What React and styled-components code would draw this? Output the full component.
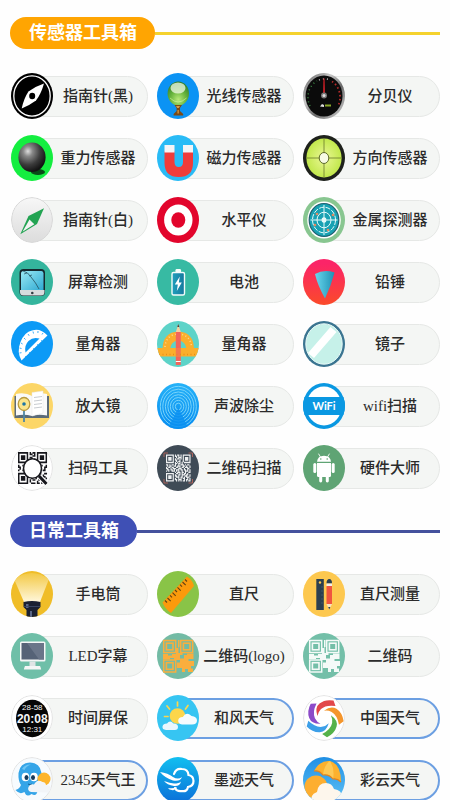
import styled, { createGlobalStyle } from "styled-components";

const GlobalStyle = createGlobalStyle`
  * {
    box-sizing: border-box;
  }
  body {
    margin: 0;
    background: #fefefe;
    font-family: "Liberation Serif", "Noto Sans CJK SC", serif;
  }
`;

const Page = styled.main`
  padding: 17px 10px 24px;
`;

const Section = styled.section`
  margin-bottom: 24px;
`;

const SectionHead = styled.header`
  display: flex;
  align-items: center;
  margin-bottom: 24px;
  &::after {
    content: "";
    flex: 1;
    height: 3px;
    background: ${(props) => props.$line};
  }
`;

const SectionTitle = styled.h2`
  margin: 0;
  height: 32px;
  padding: 0 18px 0 19px;
  border-radius: 16px;
  background: ${(props) => props.$color};
  color: #fff;
  font-size: 18px;
  font-weight: 700;
  line-height: 32px;
  white-space: nowrap;
`;

const ToolGrid = styled.div`
  display: grid;
  grid-template-columns: repeat(3, minmax(0, 1fr));
  gap: 16px 9px;
  padding-left: 1px;
`;

const ToolButton = styled.button`
  display: flex;
  align-items: center;
  width: 100%;
  padding: 0;
  border: none;
  background: none;
  font-family: inherit;
  color: #2b2b2b;
  cursor: pointer;
`;

const ToolIcon = styled.svg`
  flex: none;
  width: 42px;
  height: 46px;
  border-radius: 50%;
  overflow: hidden;
  z-index: 1;
`;

const ToolLabel = styled.span`
  flex: 1;
  height: 41px;
  margin-left: -22px;
  padding-left: 17px;
  border: ${(props) => (props.$active ? "2px solid #6c9fe2" : "1px solid #e6e8e6")};
  border-radius: 0 21px 21px 0;
  background: #f4f6f4;
  font-size: 15px;
  font-weight: 500;
  line-height: ${(props) => (props.$active ? "36px" : "38px")};
  text-align: center;
  white-space: nowrap;
`;

const Bg = ({ fill }) => <rect width="42" height="46" fill={fill} />;

const Rim = ({ fill = "#fff", stroke = "#e2e2e2" }) => (
  <ellipse cx="21" cy="23" rx="20.4" ry="22.4" fill={fill} stroke={stroke} />
);

// draws one square for every "#" of the rows
const Modules = ({ rows, x, y, w, h, fill }) => {
  const cw = w / rows[0].length;
  const ch = h / rows.length;
  let d = "";
  rows.forEach((row, r) => {
    row.split("").forEach((cell, c) => {
      if (cell === "#") {
        d += `M${x + c * cw} ${y + r * ch}h${cw + 0.05}v${ch + 0.05}h${-cw - 0.05}z`;
      }
    });
  });
  return <path d={d} fill={fill} />;
};

const QR_DENSE = [
  "#######.#.##.#.#######",
  "#.....#.##.#.#.#.....#",
  "#.###.#..#.###.#.###.#",
  "#.###.#.#.##.#.#.###.#",
  "#.###.#.##..#..#.###.#",
  "#.....#..#.##..#.....#",
  "#######.#.#.#.#.######",
  "........##.##.#.......",
  "##.#.##.#..#.###.#.##.",
  ".#.##..##.###..##.#..#",
  "#.##.##..##.#.##.###.#",
  "##..#.###..###..#..##.",
  ".##.##.#.###.##.##.#.#",
  "#.#..###.#.#..#..###.#",
  "........#.###.##.#..##",
  "#######..##.#.#.##.#..",
  "#.....#.#..##.###.##.#",
  "#.###.#.##.#..#..##..#",
  "#.###.#..###.##.#.###.",
  "#.###.#.#..#.#.##..#.#",
  "#.....#.##.###..#.##.#",
  "#######..#.#.#.##.#.##",
];

const QR_LENS = [
  "#######.#.##.#######",
  "#.....#.##.#.#.....#",
  "#.###.#...##.#.###.#",
  "#.###.#.##...#.###.#",
  "#.###.#..#.#.#.###.#",
  "#.....#.#..#.#.....#",
  "#######..#.#.#######",
  "....................",
  "#..#............#..#",
  "##................##",
  ".#................#.",
  "#..#.............##.",
  "....................",
  "#######........#..##",
  "#.....#.#..#..##.#..",
  "#.###.#.##.##....##.",
  "#.###.#..#..#.#....#",
  "#.###.#.#.##..##.##.",
  "#.....#.#....#..#..#",
  "#######..###.##.#.#.",
];

const BlockQr = ({ bg, fill }) => (
  <>
    <Bg fill={bg} />
    <g fill="none" stroke={fill} strokeWidth="1.5">
      <rect x="6.7" y="7.5" width="12" height="12" />
      <rect x="23.7" y="7.5" width="12" height="12" />
      <rect x="6.7" y="27" width="12" height="12" />
    </g>
    <g fill="none" stroke={fill} strokeWidth="1.6">
      <rect x="9.4" y="10.2" width="6.6" height="6.6" />
      <rect x="26.4" y="10.2" width="6.6" height="6.6" />
      <rect x="9.4" y="29.7" width="6.6" height="6.6" />
    </g>
    <path
      fill={fill}
      d="M6 21h5v1.500h4V21h4v-6h2V7h1.500v7h-1v6h4v2h-2.500v3.500h4V22h3v-1.500h6.500V26h-5v2h5.500v5h-3v2.500h2V39h-5v-3h-3v3h-3v-4h-5v-5.500h3V27h-6v-2h-4v1H6z"
    />
  </>
);

const icons = {
  compassDark: (
    <>
      <Bg fill="#000" />
      <ellipse cx="21" cy="23" rx="18.2" ry="20.2" fill="none" stroke="#fff" strokeWidth="1.3" />
      <path fill="#fff" d="M33 10.500Q30 21 25 27.500Q19 32 10.700 35.500Q13 25 17.500 18.500Q24 13.500 33 10.500z" />
      <ellipse cx="21.2" cy="23" rx="3" ry="3.2" fill="#000" />
    </>
  ),
  light: (
    <>
      <defs>
        <radialGradient id="lightBall" cx="0.5" cy="0.75" r="0.75">
          <stop offset="0" stopColor="#b9ea7a" />
          <stop offset="0.5" stopColor="#67b43c" />
          <stop offset="1" stopColor="#2c7a2c" />
        </radialGradient>
      </defs>
      <Bg fill="#0b93f4" />
      <ellipse cx="21.3" cy="20.5" rx="10.7" ry="12" fill="url(#lightBall)" />
      <ellipse cx="21" cy="15" rx="7.5" ry="5.5" fill="#f2fae8" opacity="0.75" />
      <path d="M13 25q8 8 16.500 0" fill="none" stroke="#d8f6a8" opacity="0.6" />
      <path fill="#7a4a17" d="M17.500 32h7.500l-2 3v3l3.200 3v1.500h-9.600V41l3-3v-3z" />
      <path fill="#d59a45" d="M19 33h4l-1.200 2h-1.600zM20.500 37h1.300v3.500h-1.300z" />
    </>
  ),
  decibel: (
    <>
      <defs>
        <linearGradient id="meterRim" x1="0" y1="0" x2="1" y2="1">
          <stop offset="0" stopColor="#555" />
          <stop offset="0.35" stopColor="#c8c8c8" />
          <stop offset="0.6" stopColor="#6a6a6a" />
          <stop offset="1" stopColor="#ddd" />
        </linearGradient>
      </defs>
      <Bg fill="url(#meterRim)" />
      <ellipse cx="21" cy="23" rx="18.5" ry="20.5" fill="#0b0b0b" />
      <path d="M7 33A16 18 0 0 1 14 8" fill="none" stroke="#3e8c45" strokeWidth="1.5" strokeDasharray="1 3" />
      <path d="M16 7A16 18 0 0 1 27 7" fill="none" stroke="#bbb" strokeWidth="1.5" strokeDasharray="1 3" />
      <path d="M29 8.500A16 18 0 0 1 35 33" fill="none" stroke="#b32a2a" strokeWidth="1.8" strokeDasharray="1.5 2.5" />
      <path d="M20.400 23L21 5.500L21.700 23z" fill="#e8242c" stroke="#e8242c" strokeWidth="0.6" />
      <circle cx="21" cy="22.5" r="3" fill="#777" />
      <circle cx="21" cy="22.5" r="1.5" fill="#ddd" />
      <path d="M17 33.500l2-2.500 2 1v2z" fill="#ddd" />
      <rect x="22" y="31.5" width="6" height="2" fill="#8aa828" />
    </>
  ),
  gravity: (
    <>
      <defs>
        <radialGradient id="steelBall" cx="0.35" cy="0.3" r="0.7">
          <stop offset="0" stopColor="#ddd" />
          <stop offset="0.25" stopColor="#888" />
          <stop offset="0.65" stopColor="#3c3c3c" />
          <stop offset="1" stopColor="#141414" />
        </radialGradient>
      </defs>
      <Bg fill="#14ee40" />
      <ellipse cx="27" cy="37" rx="7" ry="3" fill="#0a4a18" />
      <ellipse cx="21" cy="22.2" rx="13.6" ry="14.8" fill="url(#steelBall)" />
    </>
  ),
  magnet: (
    <>
      <Bg fill="#29bbf6" />
      <path fill="#f03c3a" d="M7.500 16h10v11q0 5 4.300 5t4.200-5V16h10v12q0 14-14.200 14T7.500 28z" />
      <path fill="#f4f4f6" d="M7.500 10h10v7.500h-10zM26 10h10v7.500H26z" />
    </>
  ),
  direction: (
    <>
      <defs>
        <radialGradient id="limeGlass">
          <stop offset="0" stopColor="#eaf795" />
          <stop offset="1" stopColor="#c2e84c" />
        </radialGradient>
      </defs>
      <Bg fill="#1e211c" />
      <ellipse cx="21" cy="23" rx="17.6" ry="19.6" fill="url(#limeGlass)" />
      <path d="M21 4v38M4 23h34" stroke="#697a2b" strokeWidth="0.8" />
      <ellipse cx="21" cy="23" rx="4.8" ry="5.5" fill="#f7fbe4" stroke="#5d6b28" />
    </>
  ),
  compassLight: (
    <>
      <defs>
        <linearGradient id="silver" x1="0" y1="0" x2="0" y2="1">
          <stop offset="0" stopColor="#f7f7f7" />
          <stop offset="1" stopColor="#dcdcdc" />
        </linearGradient>
      </defs>
      <Rim fill="url(#silver)" stroke="#d6d6d6" />
      <path fill="#22a352" d="M33 11.200L26 27L9.300 37.200L17.500 19z" />
      <path fill="#f3f3f3" d="M18.500 22.500l4.800 4.800L11.500 34.800z" />
    </>
  ),
  level: (
    <>
      <Bg fill="#e2052c" />
      <ellipse cx="21.3" cy="23" rx="14.2" ry="15.5" fill="#fff" />
      <ellipse cx="21.3" cy="23" rx="7" ry="7.7" fill="#e2052c" />
    </>
  ),
  metal: (
    <>
      <Bg fill="#88c690" />
      <ellipse cx="21" cy="23" rx="16.8" ry="18.6" fill="#fff" />
      <ellipse cx="21" cy="23" rx="14.8" ry="16.5" fill="#18a1b3" stroke="#22606f" strokeWidth="1.2" />
      <g fill="none" stroke="#e6fafa" strokeWidth="1">
        <ellipse cx="21" cy="23" rx="11.5" ry="12.8" strokeDasharray="5 1.5" />
        <ellipse cx="21" cy="23" rx="7" ry="7.8" />
        <path d="M21 8v30M7.500 23h27" />
      </g>
      <ellipse cx="21" cy="23" rx="2.4" ry="2.7" fill="#e6fafa" />
      <g fill="#e18a62">
        <circle cx="14" cy="17" r="1.3" />
        <circle cx="30" cy="18" r="1.3" />
        <circle cx="12" cy="28" r="1.3" />
        <circle cx="25" cy="33" r="1.3" />
      </g>
    </>
  ),
  screen: (
    <>
      <defs>
        <linearGradient id="tablet" x1="0" y1="0" x2="1" y2="1">
          <stop offset="0" stopColor="#9aeaf4" />
          <stop offset="1" stopColor="#2fa9d2" />
        </linearGradient>
      </defs>
      <Bg fill="#34b59d" />
      <rect x="8.5" y="10" width="25.5" height="27" rx="4" fill="#16282e" />
      <path d="M9 31h24.500v2q0 3.500-3.500 3.500H12.500Q9 36.500 9 33z" fill="#d7dcde" />
      <path d="M10 14.500Q10 12 12.500 12h18q2 0 2 2.500V31H10z" fill="url(#tablet)" />
      <path d="M12 12q5 1 8 6 5 6 8 12" fill="none" stroke="#24505e" strokeWidth="0.8" />
      <path d="M13 15l3-1m2 3l3-1" stroke="#24505e" strokeWidth="0.7" />
      <circle cx="21.3" cy="34" r="1.3" fill="#2f3d42" />
    </>
  ),
  battery: (
    <>
      <defs>
        <linearGradient id="cell" x1="0" y1="0" x2="1" y2="0">
          <stop offset="0" stopColor="#1fa0bd" />
          <stop offset="1" stopColor="#16779c" />
        </linearGradient>
      </defs>
      <Bg fill="#37baa3" />
      <rect x="18.5" y="10" width="5.5" height="4" rx="1.2" fill="#f2fbfa" />
      <rect x="15" y="13.5" width="12.5" height="22.5" rx="1.5" fill="url(#cell)" stroke="#f2fbfa" strokeWidth="1.4" />
      <path d="M22.800 17.500l-5 8h3l-1 6.500 5-8.500h-3z" fill="#fff" />
    </>
  ),
  plumb: (
    <>
      <defs>
        <linearGradient id="plumbBg" x1="0" y1="0" x2="0" y2="1">
          <stop offset="0.1" stopColor="#fb2468" />
          <stop offset="1" stopColor="#fb4a2a" />
        </linearGradient>
        <linearGradient id="cone" x1="0" y1="0" x2="1" y2="0">
          <stop offset="0" stopColor="#68d8ee" />
          <stop offset="1" stopColor="#1f8fb4" />
        </linearGradient>
      </defs>
      <Bg fill="url(#plumbBg)" />
      <path d="M12 15q9-5 19.500-1.500Q28 27 22 39.500Q14.500 26 12 15z" fill="url(#cone)" />
    </>
  ),
  protractor: (
    <>
      <Bg fill="#0c9af6" />
      <path
        fill="#fff"
        fillRule="evenodd"
        d="M10.500 39.500Q5.500 31 9.500 21T21 9.500Q29 6.500 36.500 14.500zM14.500 31.500L28.500 17.500Q22 15.500 17.500 20T14.500 31.500z"
      />
      <path
        d="M8.500 32l2-.3M8.500 27l2 .5M10 22l1.600 1M13 17l1.500 1.500M17 13l1.200 1.800M22 10.500l.5 2M27 10l-.1 2M32 12l-1 1.500"
        stroke="#0c9af6"
        strokeWidth="0.8"
      />
      <path d="M14 35l1.500 1.500M18 31l1.500 1.500M22 27l1.500 1.500M26 23l1.500 1.500M30 19l1.500 1.500" stroke="#0c9af6" strokeWidth="0.6" />
    </>
  ),
  rulerSet: (
    <>
      <Bg fill="#5dd3c8" />
      <path
        fill="#fbae2c"
        fillRule="evenodd"
        d="M5.500 28Q6 11 21.300 10.500Q36.500 11 37 28zM13 28h16.500Q28.500 20 21.300 19.500Q14 20 13 28z"
      />
      <path d="M8 26Q9 13.500 21.300 13Q33.500 13.500 34.500 26" fill="none" stroke="#fddb8f" strokeWidth="1.5" strokeDasharray="1 2.5" />
      <path fill="#f2655c" d="M18.800 11h5v33h-5z" />
      <path fill="#f6cfa0" d="M18.800 11l2.500-7.500 2.500 7.500z" />
      <path fill="#5a3b35" d="M20.300 6l1-3 1 3z" />
      <path fill="#fbae2c" d="M0 27h42v8.500H0z" />
      <path fill="#f2655c" d="M18.800 27h5v8.500h-5z" opacity="0.75" />
      <path fill="#fff" d="M18.800 40h5v1h-5z" />
      <path d="M2 33.500h38" stroke="#e88f1a" strokeWidth="1.5" strokeDasharray="1 2.5" />
    </>
  ),
  mirror: (
    <>
      <Bg fill="#3b7591" />
      <ellipse cx="21" cy="23" rx="18.2" ry="20.2" fill="#c6f1e9" stroke="#e6f8f6" />
      <path d="M5 32L27.500 6l6 5L11 37z" fill="#fff" />
    </>
  ),
  magnifier: (
    <>
      <Bg fill="#fcd667" />
      <path d="M3.500 13h34.500v22H3.500z" fill="#5c6b78" />
      <path d="M5 11q9-2 16 2 6-4 15-2v21.500q-9-1.500-15 .5-7-2-16-.5z" fill="#fafafa" />
      <path d="M21 13V9.500l11-1.500v22l-11 3z" fill="#fff" stroke="#e7e7e7" strokeWidth="0.5" />
      <path d="M23 14.500l8-1M23 18l8-1M23 21.500l8-1M23 25l8-1" stroke="#b9bec4" strokeWidth="0.8" />
      <path d="M13 27v12" stroke="#4f87a3" strokeWidth="1.8" />
      <ellipse cx="13" cy="21" rx="5.8" ry="6.5" fill="#fbe58b" stroke="#b99b3f" strokeWidth="1.3" />
      <circle cx="13" cy="21" r="1.8" fill="#1d76a5" />
    </>
  ),
  sound: (
    <>
      <defs>
        <linearGradient id="waveBg" x1="0" y1="0" x2="0" y2="1">
          <stop offset="0" stopColor="#25b2f8" />
          <stop offset="1" stopColor="#078cf0" />
        </linearGradient>
      </defs>
      <Bg fill="url(#waveBg)" />
      <g fill="none" stroke="#83d8fb" strokeWidth="0.9">
        {[3, 5.5, 8, 10.5, 13, 15.5, 18].map((r) => (
          <ellipse key={r} cx="21.3" cy="23.5" rx={r} ry={r * 1.12} />
        ))}
      </g>
      <path d="M21.300 25L32 46H10.500z" fill="#0a90f1" opacity="0.85" />
    </>
  ),
  wifi: (
    <>
      <Bg fill="#0a98e2" />
      <ellipse cx="21" cy="23" rx="17.6" ry="19.6" fill="#fff" />
      <path d="M0 14h42v18H0z" fill="#0a98e2" />
      <text
        x="21"
        y="27"
        textAnchor="middle"
        fill="#fff"
        fontFamily="Lato, 'Liberation Sans', sans-serif"
        fontWeight="700"
        fontSize="11"
      >
        WiFi
      </text>
    </>
  ),
  scan: (
    <>
      <Rim />
      <Modules rows={QR_LENS} x={7} y={7} w={29} h={32} fill="#17171c" />
      <path d="M28 31l8 8.500" stroke="#fff" strokeWidth="5" />
      <path d="M28 31l7.500 8" stroke="#17171c" strokeWidth="3" />
      <ellipse cx="21.5" cy="23.5" rx="9" ry="9.8" fill="#fff" stroke="#17171c" strokeWidth="1.6" />
    </>
  ),
  qrScan: (
    <>
      <Bg fill="#3f4b56" />
      <Modules rows={QR_DENSE} x={9} y={9.5} w={24.5} h={27} fill="#eef0f1" />
      <path
        d="M7 12V8h4M31.500 8h4v4M7 34v4h4M31.500 38h4v-4"
        fill="none"
        stroke="#c4685c"
        strokeWidth="0.8"
      />
    </>
  ),
  android: (
    <>
      <Bg fill="#5fa474" />
      <g fill="#fff">
        <path d="M14 16.800Q14.500 11 21 10.800Q27.500 11 28 16.800z" />
        <path d="M14 18h14v12.500q0 1.500-1.500 1.500h-11Q14 32 14 30.500z" />
        <rect x="10.3" y="18" width="3" height="10" rx="1.5" />
        <rect x="28.7" y="18" width="3" height="10" rx="1.5" />
        <rect x="16.2" y="30" width="3" height="7.5" rx="1.4" />
        <rect x="22.8" y="30" width="3" height="7.5" rx="1.4" />
      </g>
      <path d="M17.500 12l-1.800-3M24.500 12l1.800-3" stroke="#fff" strokeWidth="0.9" strokeLinecap="round" />
      <circle cx="17.8" cy="14" r="0.8" fill="#5fa474" />
      <circle cx="24.2" cy="14" r="0.8" fill="#5fa474" />
    </>
  ),
  torch: (
    <>
      <defs>
        <linearGradient id="beam" x1="0" y1="0" x2="0" y2="1">
          <stop offset="0" stopColor="#f3c945" />
          <stop offset="1" stopColor="#fff7dc" />
        </linearGradient>
      </defs>
      <Bg fill="#f0bd28" />
      <path d="M3 8Q21-4 38 8L29 31H13z" fill="url(#beam)" />
      <path d="M12.500 31q8.500-2 17 0v5l-3 3v7h-11v-7l-3-3z" fill="#1b2132" />
      <path d="M15 33h2.500v4H15zM19 40h2v6h-2z" fill="#5a6787" />
      <path d="M13 35.500h16" stroke="#3c4867" strokeWidth="0.9" />
    </>
  ),
  ruler: (
    <>
      <Bg fill="#89c447" />
      <path d="M5.500 31.500L30 5.500q6 4 7 9.500L14 42q-6-4-8.500-10.500z" fill="#fb9a0c" />
      <path
        d="M8 29.500l2 2M10.500 27l3.200 3.200M13 24.300l2 2M15.500 21.700l3.200 3.200M18 19l2 2M20.500 16.400l3.200 3.200M23 13.700l2 2M25.500 11l3.200 3.200M28 8.500l2 2"
        stroke="#5f4312"
        strokeWidth="1.1"
      />
    </>
  ),
  stationery: (
    <>
      <Bg fill="#fdc84f" />
      <rect x="13.3" y="8" width="7.5" height="31" fill="#2b3f50" />
      <circle cx="17" cy="11.5" r="1.2" fill="#fdc84f" />
      <path d="M20 16h-2M20 20h-2M20 24h-2M20 28h-2M20 32h-2" stroke="#48606f" strokeWidth="0.7" />
      <path d="M23.500 12.500q0-4.500 2.800-4.500t2.700 4.500z" fill="#2b3f50" />
      <path d="M23.500 12.500h5.500v3h-5.500z" fill="#f4efe7" />
      <path d="M23.500 15h5.500v18h-5.500z" fill="#f0553f" />
      <path d="M23.500 33h5.500l-2.700 5.500z" fill="#f8e3bf" />
      <path d="M25.200 36h2.200l-1.100 2.500z" fill="#2b3f50" />
    </>
  ),
  led: (
    <>
      <Bg fill="#6fbfa8" />
      <rect x="9" y="8.5" width="25.5" height="20" rx="1.5" fill="#f4f6f6" />
      <rect x="10.5" y="10" width="22.5" height="16.5" fill="#566277" />
      <path d="M16 10h17v16.500H28z" fill="#6a7589" />
      <path d="M18.500 28.500h6v5h-6z" fill="#dfe4e5" />
      <path d="M14 33h15q1.500 3.500 1 3.500H13q-.5 0 1-3.500z" fill="#f4f6f6" />
    </>
  ),
  qrLogo: <BlockQr bg="#73bba5" fill="#f9ae3e" />,
  qrPlain: <BlockQr bg="#73bfa8" fill="#f4faf8" />,
  clock: (
    <>
      <Rim />
      <ellipse cx="21.3" cy="23.5" rx="16.3" ry="18.7" fill="#060606" />
      <g fill="#f5f5f5" textAnchor="middle" fontFamily="'Liberation Sans', sans-serif">
        <text x="21.3" y="15" fontSize="8">28-58</text>
        <text x="21.3" y="28" fontSize="12" fontWeight="700">20:08</text>
        <text x="21.3" y="37" fontSize="8">12:31</text>
      </g>
    </>
  ),
  sunCloud: (
    <>
      <Bg fill="#36c5f2" />
      <circle cx="20.5" cy="21" r="7.8" fill="#fcd64b" />
      <path
        d="M20.500 11V7M12.500 14l-2.500-3M28.500 14l2.500-3.500M11 21.500H7.500M14 28l-2 2"
        stroke="#fcd64b"
        strokeWidth="1.7"
        strokeLinecap="round"
      />
      <path d="M9 35q-4-.5-3.500-3.500t4.500-3q3-4 6.500 0 4.500 0 4.500 3.500t-4 3z" fill="#e9f7fd" />
      <path d="M25 29.500q-4-.5-3.800-4t4.600-3.500q3.500-6 8.700-1 5.500.5 5.500 4.500t-5 4z" fill="#f4fbfe" />
    </>
  ),
  swirl: (
    <>
      <Rim />
      <defs>
        <path id="petal" d="M30.500 5.500L32.500 11Q23 9.500 18 14Q15 17 14.500 21Q11.500 12.500 16.500 8.500Q22 4 30.500 5.500z" />
      </defs>
      <g>
        <use href="#petal" fill="#e2474a" />
        <use href="#petal" fill="#f4962c" transform="rotate(72 21.3 22.8)" />
        <use href="#petal" fill="#55b24a" transform="rotate(144 21.3 22.8)" />
        <use href="#petal" fill="#3d9fe8" transform="rotate(216 21.3 22.8)" />
        <use href="#petal" fill="#8c4bc9" transform="rotate(288 21.3 22.8)" />
      </g>
    </>
  ),
  octopus: (
    <>
      <Rim fill="#f7fbfe" />
      <path
        fill="#35a5e8"
        d="M7.500 16Q9 5.500 19 5.500T30.500 16q.5 6-3 10 2 5 6 5-2 5-7 3-1 6-6 3-5 4-7-2-5 3-9-2 4-1 5.500-5Q7 24 7.500 16z"
      />
      <path fill="#6cc5f4" d="M11 12Q14 7 20 7.500 15 9 13.500 13z" />
      <ellipse cx="14.5" cy="20" rx="3.8" ry="4.3" fill="#fff" />
      <ellipse cx="23" cy="20" rx="3.8" ry="4.3" fill="#fff" />
      <ellipse cx="15.5" cy="20.5" rx="2" ry="2.5" fill="#173a5a" />
      <ellipse cx="22" cy="20.5" rx="2" ry="2.5" fill="#173a5a" />
      <path d="M17 27q2 1.500 4 0" fill="none" stroke="#17608f" />
      <circle cx="33" cy="22" r="6.5" fill="#fdb52c" />
      <path d="M20 35q-4-1.500-2.500-5t5.500-2.500q3-6 8.500-2.500 3 0 3.500 3 5 0 4.500 4t-4.500 3.500z" fill="#f2f5f8" />
    </>
  ),
  moji: (
    <>
      <defs>
        <linearGradient id="mojiBg" x1="0" y1="0" x2="0" y2="1">
          <stop offset="0" stopColor="#12bff0" />
          <stop offset="1" stopColor="#0b6fd8" />
        </linearGradient>
      </defs>
      <Bg fill="url(#mojiBg)" />
      <path
        d="M17 17q2-6 8-5 6 0 6.500 6 5 1 5 6t-5.500 6q-1 5-6 4-5 1-7-3"
        fill="none"
        stroke="#fff"
        strokeWidth="2.2"
        strokeLinecap="round"
      />
      <path d="M3 15q8 1 13 5 5 3 9 0-2 5-9 3.500Q8 21 3 15z" fill="#fff" />
      <path d="M7 24q6 2 10 2.500 5 0 7-2-1 5-7 4.500Q10 28 7 24z" fill="#fff" />
      <path d="M11 31q5 1 9-1-2 4-5 3-3 0-4-2z" fill="#fff" />
    </>
  ),
  umbrella: (
    <>
      <defs>
        <linearGradient id="skyBg" x1="0" y1="0" x2="0" y2="1">
          <stop offset="0" stopColor="#1f8fe4" />
          <stop offset="1" stopColor="#5fc2f6" />
        </linearGradient>
      </defs>
      <Bg fill="url(#skyBg)" />
      <circle cx="13" cy="30" r="11.5" fill="#fdae30" />
      <path d="M11 14Q17 3 27 4q11 3 11 21-4-4-8-3-4-5-10-4-4-5-9-4z" fill="#fcb12e" />
      <path d="M20 18q1-10 7-14 5 8 3 18-4-5-10-4z" fill="#fdc956" />
      <path d="M11 14q5-1 9 4 6-1 10 4 4-1 8 3" fill="none" stroke="#e5831b" strokeWidth="1.2" />
      <path d="M9 46q-3-8 5-11 1-9 9-9 6 0 8 6 8 1 8 8v6z" fill="#fdf6ec" />
    </>
  ),
};

const sections = [
  {
    title: "传感器工具箱",
    color: "#ffa502",
    line: "#f5d22d",
    tools: [
      { name: "指南针(黑)", icon: "compassDark" },
      { name: "光线传感器", icon: "light" },
      { name: "分贝仪", icon: "decibel" },
      { name: "重力传感器", icon: "gravity" },
      { name: "磁力传感器", icon: "magnet" },
      { name: "方向传感器", icon: "direction" },
      { name: "指南针(白)", icon: "compassLight" },
      { name: "水平仪", icon: "level" },
      { name: "金属探测器", icon: "metal" },
      { name: "屏幕检测", icon: "screen" },
      { name: "电池", icon: "battery" },
      { name: "铅锤", icon: "plumb" },
      { name: "量角器", icon: "protractor" },
      { name: "量角器", icon: "rulerSet" },
      { name: "镜子", icon: "mirror" },
      { name: "放大镜", icon: "magnifier" },
      { name: "声波除尘", icon: "sound" },
      { name: "wifi扫描", icon: "wifi" },
      { name: "扫码工具", icon: "scan" },
      { name: "二维码扫描", icon: "qrScan" },
      { name: "硬件大师", icon: "android" },
    ],
  },
  {
    title: "日常工具箱",
    color: "#3f50b5",
    line: "#44519d",
    tools: [
      { name: "手电筒", icon: "torch" },
      { name: "直尺", icon: "ruler" },
      { name: "直尺测量", icon: "stationery" },
      { name: "LED字幕", icon: "led" },
      { name: "二维码(logo)", icon: "qrLogo" },
      { name: "二维码", icon: "qrPlain" },
      { name: "时间屏保", icon: "clock" },
      { name: "和风天气", icon: "sunCloud", active: true },
      { name: "中国天气", icon: "swirl", active: true },
      { name: "2345天气王", icon: "octopus", active: true },
      { name: "墨迹天气", icon: "moji", active: true },
      { name: "彩云天气", icon: "umbrella", active: true },
    ],
  },
];

const Tool = ({ name, icon, active }) => (
  <ToolButton type="button">
    <ToolIcon viewBox="0 0 42 46" aria-hidden="true">
      {icons[icon]}
    </ToolIcon>
    <ToolLabel $active={active}>{name}</ToolLabel>
  </ToolButton>
);

export default function App() {
  return (
    <>
      <GlobalStyle />
      <Page>
        {sections.map((section) => (
          <Section key={section.title}>
            <SectionHead $line={section.line}>
              <SectionTitle $color={section.color}>{section.title}</SectionTitle>
            </SectionHead>
            <ToolGrid>
              {section.tools.map((tool) => (
                <Tool key={tool.icon} {...tool} />
              ))}
            </ToolGrid>
          </Section>
        ))}
      </Page>
    </>
  );
}
